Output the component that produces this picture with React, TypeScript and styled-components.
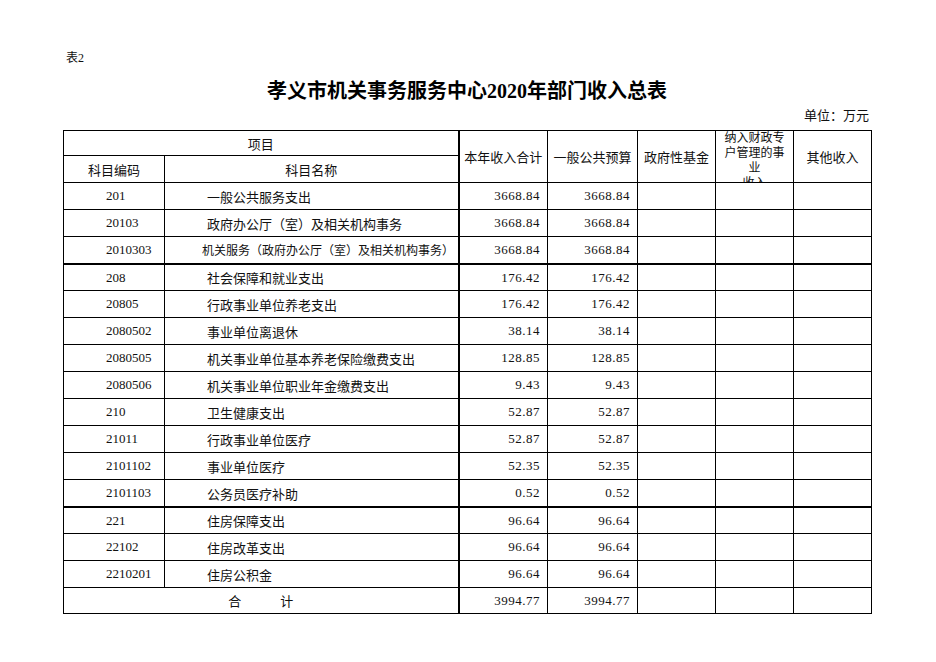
import * as React from 'react';
import styled, { createGlobalStyle } from 'styled-components';

const GlobalStyle = createGlobalStyle`
  html, body {
    margin: 0;
    padding: 0;
    background: #fff;
  }
  body {
    font-family: "Liberation Serif", "Noto Sans CJK SC", serif;
    color: #111;
  }
`;

type Row = {
  code: string;
  name: string;
  total: string;
  general: string;
  thick?: boolean;
  small?: boolean;
};

const rows: Row[] = [
  { code: '201', name: '一般公共服务支出', total: '3668.84', general: '3668.84' },
  { code: '20103', name: '政府办公厅（室）及相关机构事务', total: '3668.84', general: '3668.84' },
  {
    code: '2010303',
    name: '机关服务（政府办公厅（室）及相关机构事务）',
    total: '3668.84',
    general: '3668.84',
    small: true,
  },
  { code: '208', name: '社会保障和就业支出', total: '176.42', general: '176.42', thick: true },
  { code: '20805', name: '行政事业单位养老支出', total: '176.42', general: '176.42' },
  { code: '2080502', name: '事业单位离退休', total: '38.14', general: '38.14' },
  { code: '2080505', name: '机关事业单位基本养老保险缴费支出', total: '128.85', general: '128.85' },
  { code: '2080506', name: '机关事业单位职业年金缴费支出', total: '9.43', general: '9.43' },
  { code: '210', name: '卫生健康支出', total: '52.87', general: '52.87' },
  { code: '21011', name: '行政事业单位医疗', total: '52.87', general: '52.87' },
  { code: '2101102', name: '事业单位医疗', total: '52.35', general: '52.35' },
  { code: '2101103', name: '公务员医疗补助', total: '0.52', general: '0.52' },
  { code: '221', name: '住房保障支出', total: '96.64', general: '96.64', thick: true },
  { code: '22102', name: '住房改革支出', total: '96.64', general: '96.64' },
  { code: '2210201', name: '住房公积金', total: '96.64', general: '96.64' },
];

const colWidths = [101, 294, 89, 90, 78, 78, 78];

export default function App() {
  return (
    <>
      <GlobalStyle />
      <Page>
        <Caption>表2</Caption>
        <Title>孝义市机关事务服务中心2020年部门收入总表</Title>
        <Unit>单位：万元</Unit>
        <Sheet>
          <colgroup>
            {colWidths.map((w, i) => (
              <col key={i} style={{ width: w }} />
            ))}
          </colgroup>
          <thead>
            <tr>
              <HeadCell colSpan={2} $thickRight $h={24}>
                项目
              </HeadCell>
              <HeadCell rowSpan={2}>本年收入合计</HeadCell>
              <HeadCell rowSpan={2}>一般公共预算</HeadCell>
              <HeadCell rowSpan={2}>政府性基金</HeadCell>
              <HeadCell rowSpan={2} $clip>
                <Wrapped>
                  纳入财政专
                  <br />
                  户管理的事
                  <br />
                  业
                  <br />
                  收入
                </Wrapped>
              </HeadCell>
              <HeadCell rowSpan={2}>其他收入</HeadCell>
            </tr>
            <tr>
              <HeadCell $h={25}>科目编码</HeadCell>
              <HeadCell $thickRight>科目名称</HeadCell>
            </tr>
          </thead>
          <tbody>
            {rows.map((r) => (
              <tr key={r.code}>
                <Cell $thickTop={r.thick} $pl={42}>
                  {r.code}
                </Cell>
                <Cell $thickTop={r.thick} $thickRight $pl={r.small ? 37 : 42} $small={r.small}>
                  {r.name}
                </Cell>
                <Cell $thickTop={r.thick} $align="right" $num>
                  {r.total}
                </Cell>
                <Cell $thickTop={r.thick} $align="right" $num>
                  {r.general}
                </Cell>
                <Cell $thickTop={r.thick} />
                <Cell $thickTop={r.thick} />
                <Cell $thickTop={r.thick} />
              </tr>
            ))}
            <tr>
              <Cell colSpan={2} $thickRight $align="center" $short>
                合　　　计
              </Cell>
              <Cell $align="right" $num $short>
                3994.77
              </Cell>
              <Cell $align="right" $num $short>
                3994.77
              </Cell>
              <Cell $short />
              <Cell $short />
              <Cell $short />
            </tr>
          </tbody>
        </Sheet>
      </Page>
    </>
  );
}

const Page = styled.div`
  width: 808px;
  padding: 50px 0 40px 63px;
`;

const Caption = styled.div`
  font-size: 12px;
  line-height: 16px;
  padding-left: 3px;
`;

const Title = styled.h1`
  margin: 11px 0 0;
  font-size: 20px;
  line-height: 28px;
  font-weight: bold;
  text-align: center;
  color: #000;
`;

const Unit = styled.div`
  margin-top: 1px;
  font-size: 13px;
  line-height: 20px;
  text-align: right;
  padding-right: 2px;
`;

const Sheet = styled.table`
  margin-top: 4px;
  width: 808px;
  table-layout: fixed;
  border-collapse: collapse;
  font-size: 13px;
`;

const HeadCell = styled.th<{ $thickRight?: boolean; $h?: number; $clip?: boolean }>`
  border: 1px solid #000;
  border-right-width: ${(p) => (p.$thickRight ? 2 : 1)}px;
  height: ${(p) => (p.$h ? `${p.$h}px` : 'auto')};
  padding: 0;
  font-weight: normal;
  text-align: center;
  vertical-align: ${(p) => (p.$clip ? 'top' : 'middle')};
  white-space: nowrap;
`;

const Wrapped = styled.div`
  height: 51px;
  overflow: hidden;
  font-size: 12px;
  line-height: 15px;
`;

const Cell = styled.td<{
  $thickTop?: boolean;
  $thickRight?: boolean;
  $align?: 'left' | 'right' | 'center';
  $pl?: number;
  $small?: boolean;
  $num?: boolean;
  $short?: boolean;
}>`
  border: 1px solid #000;
  border-top-width: ${(p) => (p.$thickTop ? 2 : 1)}px;
  border-right-width: ${(p) => (p.$thickRight ? 2 : 1)}px;
  height: ${(p) => (p.$thickTop || p.$short ? 25 : 26)}px;
  padding: 0 ${(p) => (p.$align === 'right' ? 7 : 0)}px 0 ${(p) => p.$pl ?? 0}px;
  text-align: ${(p) => p.$align ?? 'left'};
  vertical-align: middle;
  white-space: nowrap;
  overflow: hidden;
  font-size: ${(p) => (p.$small ? 12 : 13)}px;
  letter-spacing: ${(p) => (p.$num ? '0.5px' : 'normal')};
`;
